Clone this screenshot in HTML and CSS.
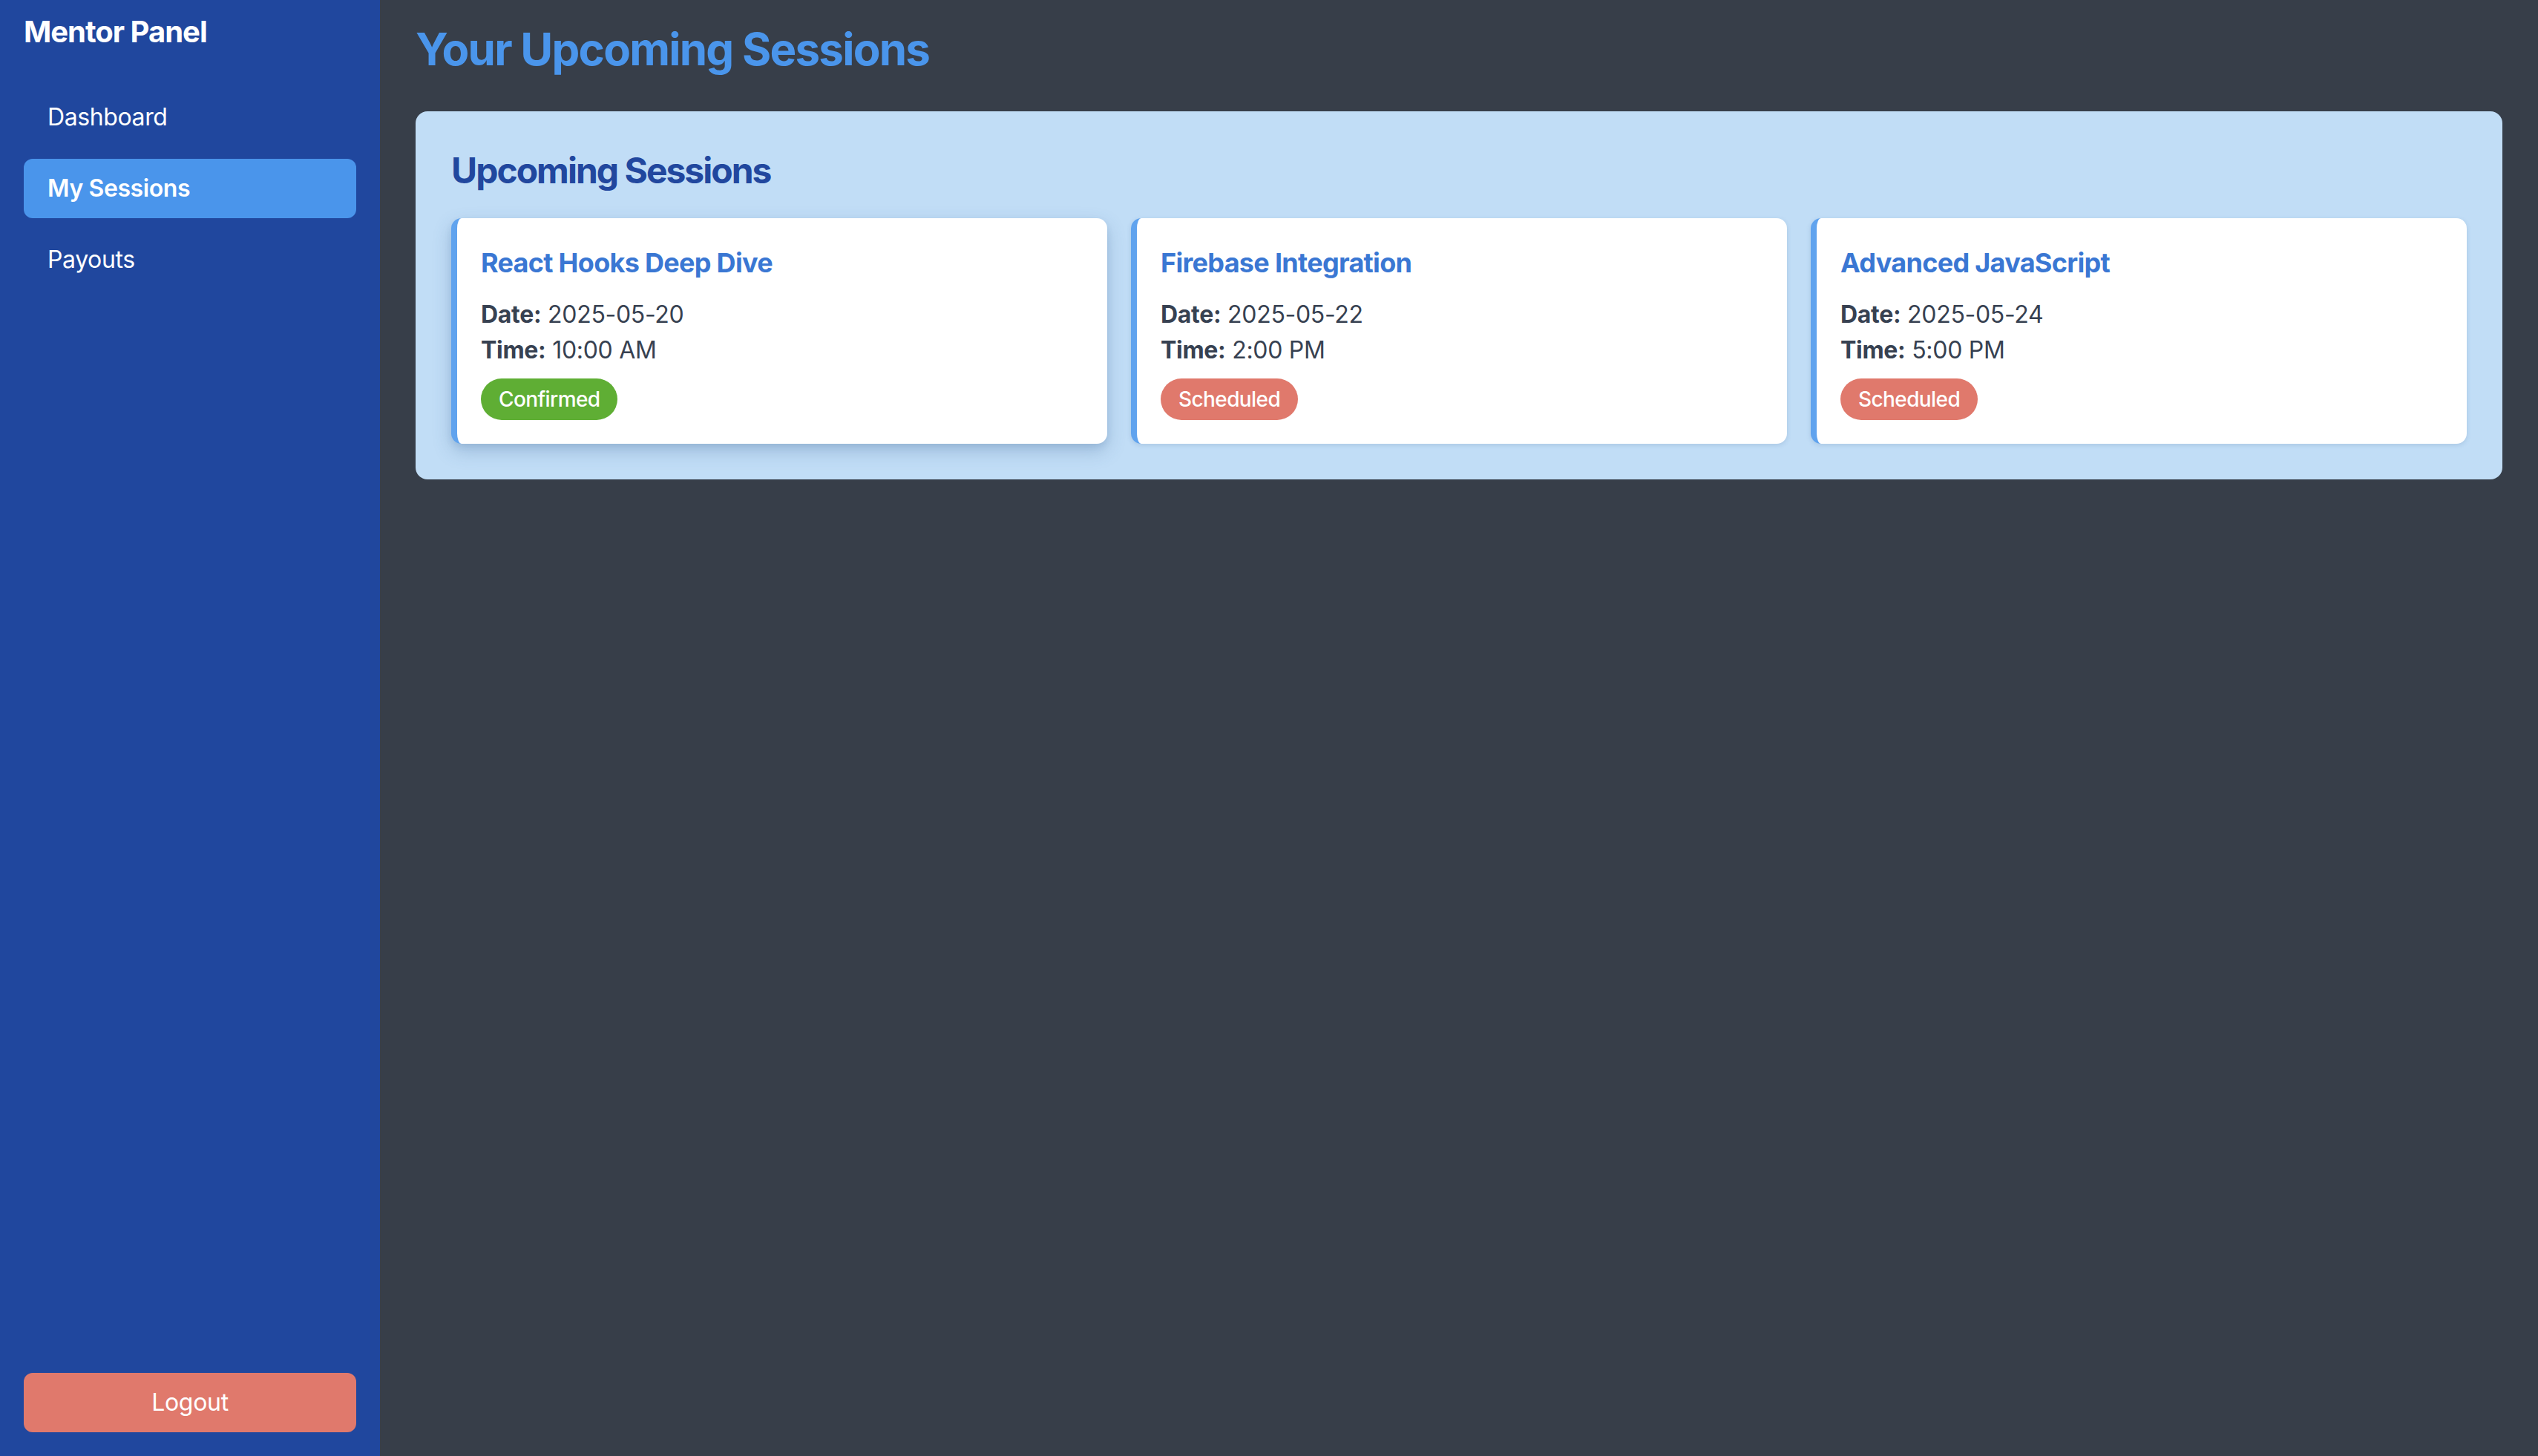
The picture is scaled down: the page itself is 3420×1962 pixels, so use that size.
FILE: index.html
```html
<!DOCTYPE html>
<html lang="en">
<head>
<meta charset="utf-8">
<title>Mentor Panel</title>
<link rel="stylesheet" href="styles.css">
</head>
<body>
<div class="app">
  <aside class="sidebar">
    <div class="sidebar-top">
      <h2 class="brand">Mentor Panel</h2>
      <nav class="nav">
        <a class="nav-item" href="#">Dashboard</a>
        <a class="nav-item active" href="#">My Sessions</a>
        <a class="nav-item" href="#">Payouts</a>
      </nav>
    </div>
    <button class="logout" type="button">Logout</button>
  </aside>
  <main class="main">
    <h1 class="page-title">Your Upcoming Sessions</h1>
    <section class="panel">
      <h2 class="panel-title">Upcoming Sessions</h2>
      <div class="cards">
        <div class="card card-hover">
          <h3 class="card-title">React Hooks Deep Dive</h3>
          <p class="line"><strong>Date:</strong> 2025-05-20</p>
          <p class="line"><strong>Time:</strong> 10:00 AM</p>
          <span class="badge badge-green">Confirmed</span>
        </div>
        <div class="card">
          <h3 class="card-title">Firebase Integration</h3>
          <p class="line"><strong>Date:</strong> 2025-05-22</p>
          <p class="line"><strong>Time:</strong> 2:00 PM</p>
          <span class="badge badge-red">Scheduled</span>
        </div>
        <div class="card">
          <h3 class="card-title">Advanced JavaScript</h3>
          <p class="line"><strong>Date:</strong> 2025-05-24</p>
          <p class="line"><strong>Time:</strong> 5:00 PM</p>
          <span class="badge badge-red">Scheduled</span>
        </div>
      </div>
    </section>
  </main>
</div>
</body>
</html>
```

FILE: styles.css
```css
* { box-sizing: border-box; }

html, body {
  margin: 0;
  padding: 0;
  height: 100%;
}

body {
  font-family: Inter, "Noto Sans", "Liberation Sans", sans-serif;
  background: #373e49;
}

.app {
  display: flex;
  height: 1962px;
}

.sidebar {
  width: 512px;
  flex-shrink: 0;
  background: #20479e;
  color: #ffffff;
  padding: 15px 32px 32px;
  display: flex;
  flex-direction: column;
  justify-content: space-between;
}

.brand {
  margin: 0 0 47px;
  font-size: 40px;
  line-height: 56px;
  font-weight: 700;
  letter-spacing: -1px;
}

.nav {
  display: flex;
  flex-direction: column;
  gap: 16px;
}

.nav-item {
  display: block;
  color: #ffffff;
  text-decoration: none;
  font-size: 32px;
  line-height: 48px;
  padding: 16px 32px;
  border-radius: 12px;
  letter-spacing: -0.4px;
}

.nav-item.active {
  background: #4a95eb;
  font-weight: 600;
}

.logout {
  display: block;
  width: 100%;
  height: 80px;
  border: none;
  border-radius: 12px;
  background: #e0796c;
  color: #ffffff;
  font-family: inherit;
  font-size: 32px;
  line-height: 48px;
  letter-spacing: -0.3px;
  cursor: pointer;
}

.main {
  flex: 1;
  padding: 30px 48px 48px;
}

.page-title {
  margin: 0 0 48px;
  font-size: 60px;
  line-height: 72px;
  font-weight: 700;
  color: #4a95eb;
  letter-spacing: -1.75px;
}

.panel {
  background: #c1ddf6;
  border-radius: 16px;
  padding: 48px;
}

.panel-title {
  margin: 0 0 32px;
  font-size: 48px;
  line-height: 64px;
  font-weight: 700;
  color: #21479e;
  letter-spacing: -2px;
}

.cards {
  display: grid;
  grid-template-columns: repeat(3, 1fr);
  gap: 32px;
}

.card {
  background: #ffffff;
  border-left: 8px solid #60a3ee;
  border-radius: 14px;
  padding: 32px 32px 32px 32px;
  box-shadow: 0 2px 6px rgba(60, 100, 150, 0.18);
}

.card-hover {
  box-shadow: 0 10px 24px rgba(60, 100, 150, 0.28), 0 4px 8px rgba(60, 100, 150, 0.12);
}

.card-title {
  margin: 0 0 18px;
  font-size: 36px;
  line-height: 56px;
  font-weight: 700;
  color: #3a77d3;
  letter-spacing: -0.7px;
}

.line {
  margin: 0;
  font-size: 32px;
  line-height: 48px;
  color: #374151;
  letter-spacing: -0.3px;
}

.line strong {
  font-weight: 700;
}

.badge {
  display: inline-block;
  margin-top: 14px;
  padding: 8px 24px;
  border-radius: 9999px;
  font-size: 28px;
  line-height: 40px;
  font-weight: 500;
  color: #ffffff;
  letter-spacing: -0.6px;
}

.badge-green { background: #5fae34; }
.badge-red { background: #e0796c; }
```
